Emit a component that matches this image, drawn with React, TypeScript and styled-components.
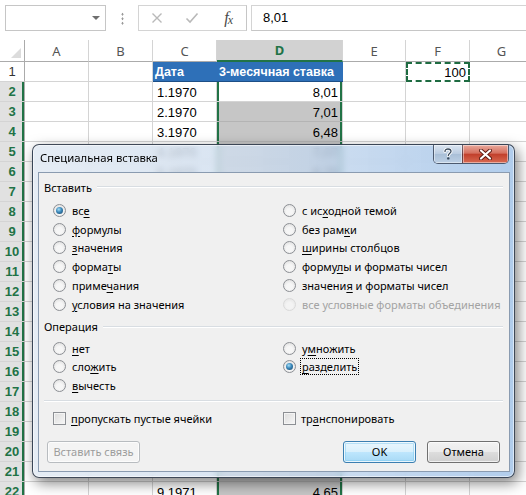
import React from "react";
import styled, { createGlobalStyle, css } from "styled-components";

const GlobalStyle = createGlobalStyle`
  html, body {
    margin: 0;
    padding: 0;
    background: #fff;
  }
  body {
    overflow: hidden;
  }
`;

const UI_FONT = `"Noto Sans", "Open Sans", sans-serif`;
const GREEN = "#217346";

const Screen = styled.div`
  position: relative;
  width: 526px;
  height: 495px;
  overflow: hidden;
  background: #fff;
  font-family: "Liberation Sans", Arial, sans-serif;
`;

/* ---------- formula bar ---------- */

const FormulaBar = styled.div`
  display: flex;
  align-items: flex-start;
  height: 40px;
  padding: 5px 0 0 5px;
  box-sizing: border-box;
`;

const NameBox = styled.div`
  position: relative;
  width: 101px;
  height: 26px;
  box-sizing: border-box;
  border: 1px solid #c6c6c6;

  &::after {
    content: "";
    position: absolute;
    right: 5px;
    top: 10px;
    border-style: solid;
    border-width: 4px 4px 0 4px;
    border-color: #6f6f6f transparent transparent transparent;
  }
`;

const Grip = styled.div`
  width: 3px;
  height: 13px;
  margin: 7px 14px 0 15px;
  background: radial-gradient(circle, #9a9a9a 0.9px, transparent 1.2px) repeat-y;
  background-size: 3px 4.5px;
`;

const FxBox = styled.div`
  display: flex;
  justify-content: space-around;
  align-items: center;
  width: 109px;
  height: 26px;
  box-sizing: border-box;
  border: 1px solid #d4d4d4;
  border-right: 1px solid #c6c6c6;
`;

const FxIcon = styled.span`
  display: flex;
  align-items: center;
  justify-content: center;
  width: 24px;
  height: 20px;
`;

const FxText = styled.span`
  font-family: "Liberation Serif", "DejaVu Serif", serif;
  font-style: italic;
  font-size: 16px;
  color: #4a4a4a;
  letter-spacing: -1px;

  small {
    font-size: 12px;
    vertical-align: -1px;
  }
`;

const FormulaInput = styled.div`
  flex: 1;
  height: 26px;
  margin-left: 4px;
  box-sizing: border-box;
  border-top: 1px solid #d4d4d4;
  border-bottom: 1px solid #c6c6c6;
  border-left: 1px solid #d4d4d4;
  padding-left: 11px;
  font-size: 13px;
  line-height: 24px;
  color: #000;
`;

/* ---------- sheet grid ---------- */

const Grid = styled.div`
  display: grid;
  grid-template-columns: 25px 64px 64px 64px 126px 63px 64px 64px;
  grid-template-rows: 22px;
  grid-auto-rows: 20px;
  font-size: 13px;
  color: #000;
`;

const Corner = styled.div`
  position: relative;
  box-sizing: border-box;
  border-right: 1px solid #ababab;
  border-bottom: 1px solid #ababab;

  &::after {
    content: "";
    position: absolute;
    right: 3px;
    bottom: 3px;
    border-style: solid;
    border-width: 0 0 10px 10px;
    border-color: transparent transparent #dcdcdc transparent;
  }
`;

const ColHead = styled.div<{ $active?: boolean }>`
  display: flex;
  align-items: center;
  justify-content: center;
  box-sizing: border-box;
  border-right: 1px solid #d4d4d4;
  border-bottom: 1px solid #ababab;
  font-family: ${UI_FONT};
  font-size: 13px;
  color: #555;

  ${(p) =>
    p.$active &&
    css`
      background: #d2d2d2;
      color: ${GREEN};
      font-weight: bold;
      border-bottom: 2px solid ${GREEN};
    `}
`;

const RowHead = styled.div<{ $active?: boolean }>`
  display: flex;
  align-items: center;
  justify-content: center;
  box-sizing: border-box;
  border-right: 1px solid #ababab;
  border-bottom: 1px solid #d4d4d4;
  font-size: 13px;
  color: #333;

  ${(p) =>
    p.$active &&
    css`
      background: #e1e1e1;
      color: ${GREEN};
      font-weight: bold;
      box-shadow: inset -2px 0 0 ${GREEN};
    `}
`;

type Tone = "plain" | "head" | "sel" | "active" | "copy";

const Cell = styled.div<{ $right?: boolean; $tone?: Tone }>`
  display: flex;
  align-items: center;
  justify-content: ${(p) => (p.$right ? "flex-end" : "flex-start")};
  padding: 1px 4px 0 4px;
  box-sizing: border-box;
  border-right: 1px solid #d4d4d4;
  border-bottom: 1px solid #d4d4d4;
  white-space: nowrap;
  overflow: hidden;

  ${(p) =>
    p.$tone === "head" &&
    css`
      background: #2e70b8;
      color: #fff;
      font-weight: bold;
      font-size: 12.5px;
      padding-left: 2px;
      border-bottom: 1px solid #1d4f86;
      border-right: none;
    `}
  ${(p) =>
    p.$tone === "sel" &&
    css`
      background: #c6c6c6;
      border-bottom-color: #b4b4b4;
      box-shadow: inset 2px 0 0 ${GREEN}, inset -2px 0 0 ${GREEN};
    `}
  ${(p) =>
    p.$tone === "active" &&
    css`
      background: #fff;
      box-shadow: inset 2px 0 0 ${GREEN}, inset -2px 0 0 ${GREEN};
    `}
  ${(p) =>
    p.$tone === "copy" &&
    css`
      border: 2px dashed #1e6b41;
      padding-right: 2px;
    `}
`;

/* ---------- dialog ---------- */

const DialogFrame = styled.div`
  position: absolute;
  left: 32px;
  top: 144px;
  width: 483px;
  height: 334px;
  box-sizing: border-box;
  display: flex;
  flex-direction: column;
  border: 1px solid rgba(35, 45, 60, 0.85);
  border-radius: 7px;
  background: linear-gradient(
    90deg,
    rgba(222, 231, 241, 0.78) 0%,
    rgba(205, 220, 238, 0.78) 45%,
    rgba(160, 194, 232, 0.82) 100%
  );
  backdrop-filter: blur(3px);
  box-shadow: 3px 5px 14px rgba(0, 0, 0, 0.5),
    inset 0 0 0 1px rgba(255, 255, 255, 0.55);
  font-family: ${UI_FONT};
  font-size: 11px;
  color: #000;
`;

const TitleBar = styled.div`
  display: flex;
  align-items: flex-start;
  height: 27px;
  flex: none;
  padding-left: 7px;
`;

const Title = styled.div`
  line-height: 25px;
  font-size: 11.3px;
`;

const Controls = styled.div`
  display: flex;
  margin-left: auto;
  margin-right: 5px;
  height: 18px;
  border: 1px solid rgba(40, 50, 70, 0.75);
  border-top: none;
  border-radius: 0 0 5px 5px;
  overflow: hidden;
`;

const CtlButton = styled.div<{ $close?: boolean }>`
  display: flex;
  align-items: center;
  justify-content: center;
  width: 28px;
  background: linear-gradient(#dbe5f1, #b9cbe0 50%, #a9bfd7 51%, #bdd0e5);
  box-shadow: inset 0 0 0 1px rgba(255, 255, 255, 0.45);

  ${(p) =>
    p.$close &&
    css`
      width: 45px;
      border-left: 1px solid rgba(40, 50, 70, 0.6);
      background: linear-gradient(#e9a99c, #d5705f 45%, #c2402c 52%, #d86a52);
    `}
`;

const Client = styled.div`
  flex: 1;
  display: flex;
  flex-direction: column;
  margin: 0 4px 5px 5px;
  padding: 5px 6px 0 5px;
  box-sizing: border-box;
  background: #f0f0f0;
  border: 1px solid #8a9bb0;
`;

const GroupLabel = styled.div<{ $top?: number }>`
  display: flex;
  align-items: center;
  gap: 5px;
  height: 18px;
  margin-top: ${(p) => p.$top ?? 0}px;

  &::after {
    content: "";
    flex: 1;
    height: 1px;
    background: #d8dde2;
    border-bottom: 1px solid #fff;
  }
`;

const OptionGrid = styled.div<{ $rows: number; $top: number }>`
  display: grid;
  grid-template-columns: 230px 1fr;
  grid-template-rows: repeat(${(p) => p.$rows}, 18.8px);
  grid-auto-flow: column;
  margin: ${(p) => p.$top}px 0 0 9px;
`;

const Option = styled.label<{ $disabled?: boolean }>`
  display: flex;
  align-items: center;
  gap: 5px;
  white-space: nowrap;
  color: ${(p) => (p.$disabled ? "#a3a3a3" : "#000")};
`;

const Radio = styled.span<{ $checked?: boolean; $disabled?: boolean }>`
  position: relative;
  flex: none;
  width: 13px;
  height: 13px;
  box-sizing: border-box;
  border-radius: 50%;
  border: 1px solid ${(p) => (p.$disabled ? "#cbcbcb" : "#8c8f94")};
  background: radial-gradient(circle at 50% 60%, #f6f6f6 35%, #d9d9d9 100%);
  opacity: ${(p) => (p.$disabled ? 0.6 : 1)};

  ${(p) =>
    p.$checked &&
    css`
      &::after {
        content: "";
        position: absolute;
        left: 2px;
        top: 2px;
        width: 7px;
        height: 7px;
        border-radius: 50%;
        background: radial-gradient(circle at 40% 35%, #a5def7 0%, #3a87b9 45%, #173f60 100%);
      }
    `}
`;

const Check = styled.span`
  flex: none;
  width: 13px;
  height: 13px;
  box-sizing: border-box;
  border: 1px solid #8c8f94;
  background: linear-gradient(135deg, #dcdcdc, #f7f7f7);
  box-shadow: inset 0 0 0 1px #f4f4f4;
`;

const Focus = styled.span<{ $on?: boolean }>`
  padding: 0 1px;
  outline: ${(p) => (p.$on ? "1px dotted #000" : "none")};
  outline-offset: 0;
`;

const Key = styled.span`
  text-decoration: underline;
  text-underline-offset: 2px;
`;

const Divider = styled.div`
  height: 1px;
  margin-top: 5px;
  background: #d8dde2;
  border-bottom: 1px solid #fff;
`;

const ButtonRow = styled.div`
  display: flex;
  align-items: center;
  gap: 11px;
  margin: 13px 3px 0 3px;
`;

const Button = styled.div<{ $variant?: "default" | "disabled" }>`
  display: flex;
  align-items: center;
  justify-content: center;
  width: 73px;
  height: 22px;
  box-sizing: border-box;
  border: 1px solid #707070;
  border-radius: 3px;
  background: linear-gradient(#f2f2f2, #ebebeb 50%, #dddddd 51%, #cfcfcf);
  box-shadow: inset 0 0 0 1px rgba(255, 255, 255, 0.7);

  ${(p) =>
    p.$variant === "default" &&
    css`
      border-color: #3c7fb1;
      background: linear-gradient(#eaf6fd, #d9f0fc 50%, #bee6fd 51%, #a7d9f5);
      box-shadow: inset 0 0 0 1px rgba(255, 255, 255, 0.8),
        inset 0 0 0 2px rgba(120, 200, 240, 0.45);
    `}
  ${(p) =>
    p.$variant === "disabled" &&
    css`
      width: 93px;
      margin-right: auto;
      color: #9c9c9c;
      border-color: #b8bcc0;
      background: #f4f4f4;
    `}
`;

/* ---------- data ---------- */

// rows 7..21 are fully hidden behind the dialog, so only the rows that
// show through the glass frame carry text
const dates: Record<number, string> = {
  2: "1.1970",
  3: "2.1970",
  4: "3.1970",
  5: "4.1970",
  6: "5.1970",
  22: "9.1971",
};

const rates: Record<number, string> = {
  2: "8,01",
  3: "7,01",
  4: "6,48",
  5: "7,07",
  6: "6,75",
  22: "4,65",
};

const columns = ["A", "B", "C", "D", "E", "F", "G"];

const label = (text: string) => {
  const i = text.indexOf("&");
  if (i < 0) return text;
  return (
    <>
      {text.slice(0, i)}
      <Key>{text[i + 1]}</Key>
      {text.slice(i + 2)}
    </>
  );
};

interface Opt {
  text: string;
  checked?: boolean;
  disabled?: boolean;
  focus?: boolean;
}

const pasteOpts: Opt[] = [
  { text: "вс&е", checked: true },
  { text: "&формулы" },
  { text: "&значения" },
  { text: "форма&ты" },
  { text: "приме&чания" },
  { text: "&условия на значения" },
  { text: "с ис&ходной темой" },
  { text: "без рам&ки" },
  { text: "&ширины столбцов" },
  { text: "форму&лы и форматы чисел" },
  { text: "значени&я и форматы чисел" },
  { text: "все условные форматы объединения", disabled: true },
];

const opOpts: Opt[] = [
  { text: "&нет" },
  { text: "сло&жить" },
  { text: "&вычесть" },
  { text: "у&множить" },
  { text: "&разделить", checked: true, focus: true },
];

const RadioOption = ({ opt }: { opt: Opt }) => (
  <Option $disabled={opt.disabled}>
    <Radio $checked={opt.checked} $disabled={opt.disabled} />
    <Focus $on={opt.focus}>{label(opt.text)}</Focus>
  </Option>
);

const SheetRow = ({ n }: { n: number }) => {
  const active = n >= 2;
  const cells: React.ReactNode[] = [];

  // A, B
  cells.push(<Cell key="a" />, <Cell key="b" />);

  // C
  if (n === 1) cells.push(<Cell key="c" $tone="head">Дата</Cell>);
  else cells.push(<Cell key="c">{dates[n]}</Cell>);

  // D
  if (n === 1) cells.push(<Cell key="d" $tone="head">3-месячная ставка</Cell>);
  else
    cells.push(
      <Cell key="d" $right $tone={n === 2 ? "active" : "sel"}>
        {rates[n]}
      </Cell>
    );

  // E, F, G
  cells.push(<Cell key="e" />);
  cells.push(
    n === 1 ? (
      <Cell key="f" $right $tone="copy">
        100
      </Cell>
    ) : (
      <Cell key="f" />
    )
  );
  cells.push(<Cell key="g" />);

  return (
    <>
      <RowHead $active={active}>{n}</RowHead>
      {cells}
    </>
  );
};

const PasteSpecial = () => (
  <DialogFrame>
    <TitleBar>
      <Title>Специальная вставка</Title>
      <Controls>
        <CtlButton>
          <svg width="10" height="12" viewBox="0 0 10 12">
            <path
              d="M2 3.5 C2 1.5 3.5 1 5 1 C6.8 1 8 2 8 3.5 C8 5.2 5.3 5.4 5.3 7.6"
              fill="none"
              stroke="#fff"
              strokeWidth="3"
              strokeLinecap="round"
            />
            <path
              d="M2 3.5 C2 1.5 3.5 1 5 1 C6.8 1 8 2 8 3.5 C8 5.2 5.3 5.4 5.3 7.6"
              fill="none"
              stroke="#3a4a5c"
              strokeWidth="1.3"
              strokeLinecap="round"
            />
            <circle cx="5.3" cy="10.4" r="1.2" fill="#3a4a5c" />
          </svg>
        </CtlButton>
        <CtlButton $close>
          <svg width="13" height="11" viewBox="0 0 13 11">
            <path
              d="M2 1.5 L11 9.5 M11 1.5 L2 9.5"
              stroke="#5a1c14"
              strokeWidth="4"
              strokeLinecap="round"
            />
            <path
              d="M2 1.5 L11 9.5 M11 1.5 L2 9.5"
              stroke="#fff"
              strokeWidth="2.2"
              strokeLinecap="round"
            />
          </svg>
        </CtlButton>
      </Controls>
    </TitleBar>

    <Client>
      <GroupLabel>Вставить</GroupLabel>
      <OptionGrid $rows={6} $top={5}>
        {pasteOpts.map((o) => (
          <RadioOption key={o.text} opt={o} />
        ))}
      </OptionGrid>

      <GroupLabel $top={4}>Операция</GroupLabel>
      <OptionGrid $rows={3} $top={3}>
        {opOpts.map((o) => (
          <RadioOption key={o.text} opt={o} />
        ))}
      </OptionGrid>

      <Divider />

      <OptionGrid $rows={1} $top={7}>
        <Option>
          <Check />
          <span>{label("&пропускать пустые ячейки")}</span>
        </Option>
        <Option>
          <Check />
          <span>{label("тр&анспонировать")}</span>
        </Option>
      </OptionGrid>

      <ButtonRow>
        <Button $variant="disabled">Вставить связь</Button>
        <Button $variant="default">OK</Button>
        <Button>Отмена</Button>
      </ButtonRow>
    </Client>
  </DialogFrame>
);

export default function App() {
  return (
    <Screen>
      <GlobalStyle />
      <FormulaBar>
        <NameBox />
        <Grip />
        <FxBox>
          <FxIcon>
            <svg width="12" height="12" viewBox="0 0 12 12">
              <path d="M1.5 1.5 L10.5 10.5 M10.5 1.5 L1.5 10.5" stroke="#b9b9b9" strokeWidth="1.4" />
            </svg>
          </FxIcon>
          <FxIcon>
            <svg width="14" height="12" viewBox="0 0 14 12">
              <path d="M1.5 6.5 L5 10 L12.5 1.5" fill="none" stroke="#b9b9b9" strokeWidth="1.6" />
            </svg>
          </FxIcon>
          <FxIcon>
            <FxText>
              f<small>x</small>
            </FxText>
          </FxIcon>
        </FxBox>
        <FormulaInput>8,01</FormulaInput>
      </FormulaBar>

      <Grid>
        <Corner />
        {columns.map((c) => (
          <ColHead key={c} $active={c === "D"}>
            {c}
          </ColHead>
        ))}
        {Array.from({ length: 22 }, (_, i) => (
          <SheetRow key={i} n={i + 1} />
        ))}
      </Grid>

      <PasteSpecial />
    </Screen>
  );
}
